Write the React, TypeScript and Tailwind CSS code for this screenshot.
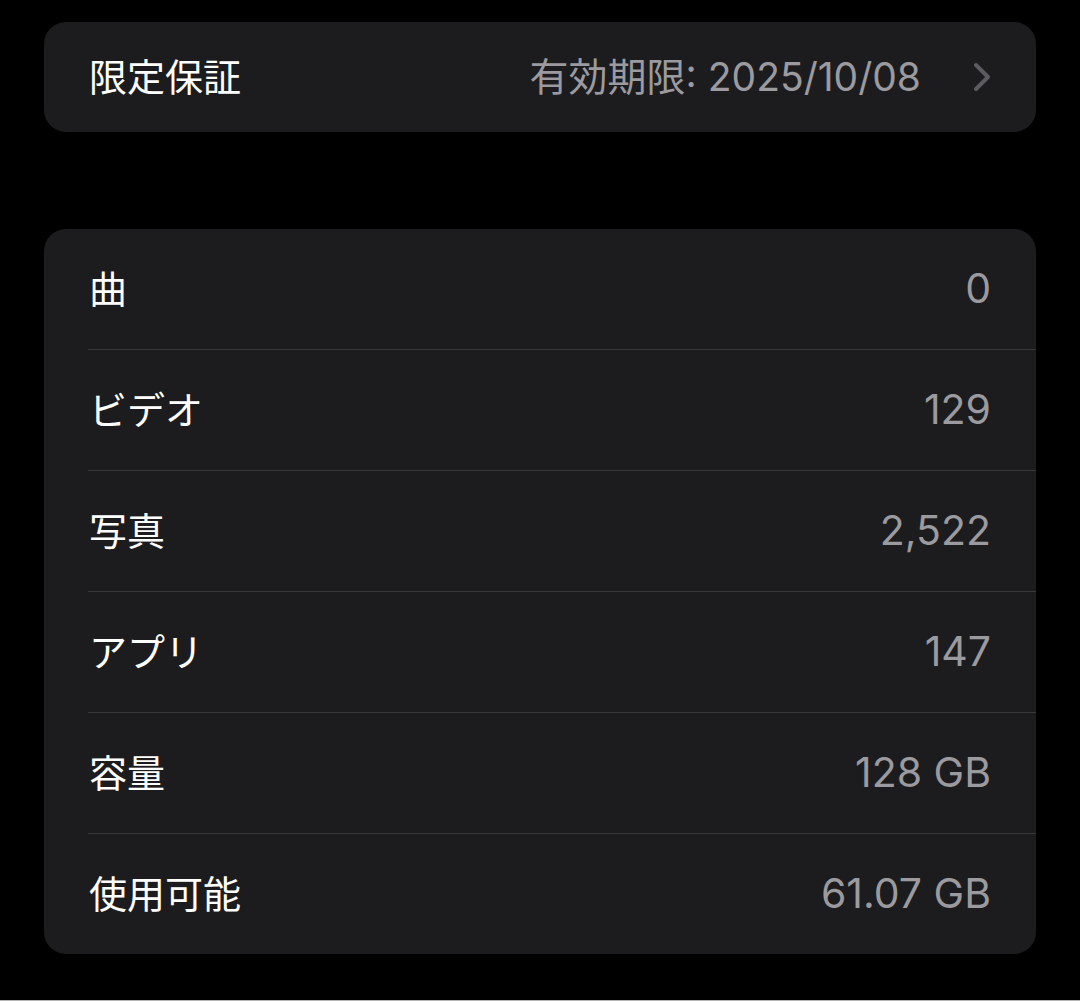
const rows = [
  { label: "曲", value: "0" },
  { label: "ビデオ", value: "129" },
  { label: "写真", value: "2,522" },
  { label: "アプリ", value: "147" },
  { label: "容量", value: "128 GB" },
  { label: "使用可能", value: "61.07 GB" },
];

export default function App() {
  return (
    <main className="flex h-[1001px] flex-col bg-black px-[44px] pt-[22px] text-[38px] font-['Inter','Noto_Sans_CJK_JP',sans-serif] text-white">
      <section className="flex h-[110px] items-center rounded-[22px] bg-[#1c1c1e] pl-[45px] pr-[45px]">
        <span>限定保証</span>
        <span className="ml-auto text-[39px] text-[#9a9a9f]">有効期限: 2025/10/08</span>
        <svg className="ml-[52px] h-[30px] w-[18px]" viewBox="0 0 18 30" fill="none">
          <path d="M3 3 L15 15 L3 27" stroke="#5c5c60" strokeWidth="4" strokeLinecap="round" strokeLinejoin="round" />
        </svg>
      </section>

      <section className="mt-[97px] overflow-hidden rounded-[22px] bg-[#1c1c1e]">
        {rows.map((row, index) => (
          <div key={row.label}>
            {index > 0 ? <div className="ml-[44px] h-px bg-[#38383a]" /> : null}
            <div className="flex h-[120px] items-center justify-between px-[45px]">
              <span>{row.label}</span>
              <span className="text-[41px] text-[#9a9a9f]">{row.value}</span>
            </div>
          </div>
        ))}
      </section>

      <div className="mt-auto -mx-[44px] h-px bg-[#b5b5b5]" />
    </main>
  );
}
